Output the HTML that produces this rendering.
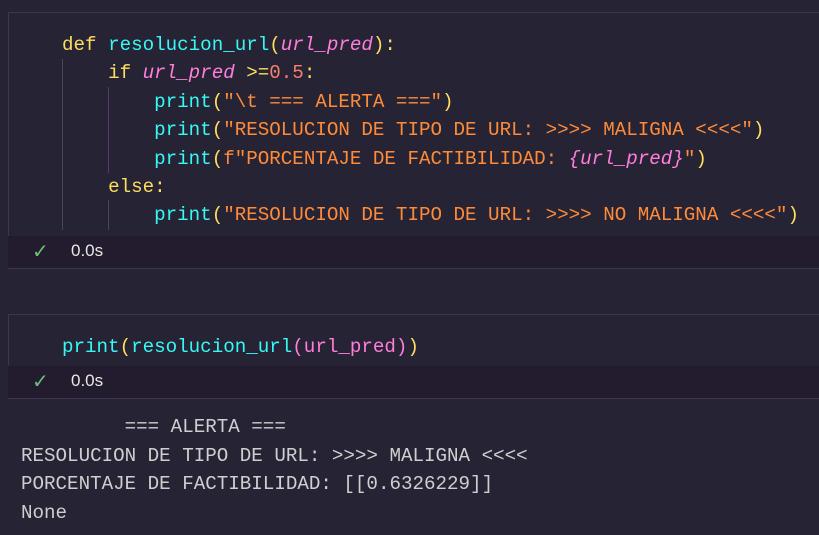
<!DOCTYPE html><html><head><style>
body{margin:0;width:819px;height:535px;background:#262335;overflow:hidden;position:relative;font-family:"Liberation Mono",monospace;}
.cell{position:absolute;left:8px;width:820px;border:1px solid #3b3750;box-sizing:border-box}
.code{position:absolute;left:62px;font-size:19.2px;line-height:28.4px;white-space:pre;color:#fff}
.st{position:absolute;left:8px;width:820px;height:32px;background:#221c2e;}
.st span{position:absolute;left:63px;top:5px;font:17px "Liberation Sans",sans-serif;color:#e8e8e8}
.st i{position:absolute;left:24px;top:3px;color:#6fbf73;font-style:normal;font-size:20px;font-family:"DejaVu Sans"}
.k{color:#fede5d}.f{color:#36f9f6}.p{color:#ff7edb;font-style:italic}.s{color:#ff8b39}.n{color:#f97e72}.y{color:#fede5d}.g{position:absolute;width:1px;background:#4a4560}
.out{position:absolute;left:21px;top:413px;font-size:19.2px;line-height:28.6px;white-space:pre;color:#cfcfcf}
</style></head><body>
<div class="cell" style="top:12px;height:257px"></div>
<div class="g" style="left:62px;top:59px;height:171px"></div>
<div class="g" style="left:108px;top:87px;height:86px;background:#5a3a6a"></div>
<div class="g" style="left:108px;top:200px;height:30px"></div>
<div class="code" style="top:31px"><span class="k">def</span> <span class="f">resolucion_url</span><span class="y">(</span><span class="p">url_pred</span><span class="y">)</span><span class="k">:</span>
    <span class="k">if</span> <span class="p">url_pred</span> <span class="k">&gt;=</span><span class="n">0.5</span><span class="k">:</span>
        <span class="f">print</span><span class="y">(</span><span class="s">"\t === ALERTA ==="</span><span class="y">)</span>
        <span class="f">print</span><span class="y">(</span><span class="s">"RESOLUCION DE TIPO DE URL: &gt;&gt;&gt;&gt; MALIGNA &lt;&lt;&lt;&lt;"</span><span class="y">)</span>
        <span class="f">print</span><span class="y">(</span><span class="s">f"PORCENTAJE DE FACTIBILIDAD: </span><span class="p">{url_pred}</span><span class="s">"</span><span class="y">)</span>
    <span class="k">else:</span>
        <span class="f">print</span><span class="y">(</span><span class="s">"RESOLUCION DE TIPO DE URL: &gt;&gt;&gt;&gt; NO MALIGNA &lt;&lt;&lt;&lt;"</span><span class="y">)</span></div>
<div class="st" style="top:236px"><i>✓</i><span>0.0s</span></div>
<div class="cell" style="top:314px;height:85px"></div>
<div class="code" style="top:333px"><span class="f">print</span><span class="y">(</span><span class="f">resolucion_url</span><span class="p" style="font-style:normal">(url_pred)</span><span class="y">)</span></div>
<div class="st" style="top:366px"><i>✓</i><span>0.0s</span></div>
<div class="out">         === ALERTA ===
RESOLUCION DE TIPO DE URL: &gt;&gt;&gt;&gt; MALIGNA &lt;&lt;&lt;&lt;
PORCENTAJE DE FACTIBILIDAD: [[0.6326229]]
None</div>
</body></html>
